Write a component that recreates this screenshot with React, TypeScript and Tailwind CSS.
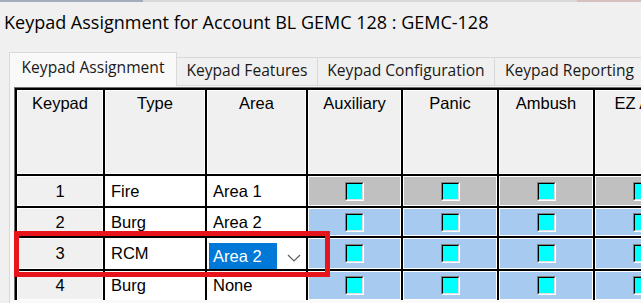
import { Fragment } from "react";

const columns = [
  { label: "Keypad", width: 86 },
  { label: "Type", width: 100 },
  { label: "Area", width: 99 },
  { label: "Auxiliary", width: 93 },
  { label: "Panic", width: 94 },
  { label: "Ambush", width: 94 },
  { label: "EZ Arm", width: 94 },
];

const rows = [
  { keypad: "1", type: "Fire", area: "Area 1", height: 30, disabled: true },
  { keypad: "2", type: "Burg", area: "Area 2", height: 28, disabled: false },
  { keypad: "3", type: "RCM", area: "Area 2", height: 31, disabled: false, editing: true },
  { keypad: "4", type: "Burg", area: "None", height: 29, disabled: false },
];

const tabs = [
  { label: "Keypad Features", width: 141 },
  { label: "Keypad Configuration", width: 177 },
  { label: "Keypad Reporting", width: 150 },
];

function FlagBox() {
  return (
    <div className="border border-t-[#808080] border-l-[#808080] border-b-white border-r-white">
      <div className="h-[17px] w-[17px] border border-t-black border-l-black border-b-[#dfdfdf] border-r-[#dfdfdf] bg-[#00ffff]" />
    </div>
  );
}

function AreaDropdown({ value }: { value: string }) {
  return (
    <div className="flex h-full w-full items-start bg-white pl-[2px] pt-[5px]">
      <span className="flex h-[26px] w-[68px] items-center bg-[#0078d7] pl-[4px] text-white">{value}</span>
      <svg className="ml-[10px] mt-[11px]" width="14" height="8" viewBox="0 0 14 8" fill="none">
        <path d="M1 1 L7 7 L13 1" stroke="#606060" strokeWidth="1.2" />
      </svg>
    </div>
  );
}

export default function App() {
  return (
    <div className="relative h-[303px] w-[641px] overflow-hidden bg-[#f0f0f0] font-['Open_Sans','Noto_Sans',sans-serif]">
      <div className="flex h-[2px]">
        <div className="w-[143px] bg-[#a3adbb]" />
        <div className="w-[434px] bg-[#d9d9d9]" />
        <div className="flex-1 bg-[#d9c0c0]" />
      </div>

      <div className="mt-[8px] h-[24px] pl-[4px] text-[18px] leading-[24px] whitespace-nowrap text-black">
        Keypad Assignment for Account BL GEMC 128 : GEMC-128
      </div>

      <div className="mt-[18px] flex h-[33px] items-end pl-[9px] text-[15.6px] whitespace-nowrap text-[#1a1a1a]">
        <div className="relative z-10 -mb-[1px] flex h-[34px] w-[168px] shrink-0 items-start justify-center border border-b-0 border-[#d9d9d9] bg-[#f9f9f9] pt-[3px]">
          Keypad Assignment
        </div>
        {tabs.map((tab) => (
          <div
            key={tab.label}
            style={{ width: tab.width }}
            className="flex h-[28px] shrink-0 items-center justify-center border border-b-0 border-l-0 border-[#d9d9d9] bg-[#f0f0f0] pb-[1px]"
          >
            {tab.label}
          </div>
        ))}
      </div>

      <div className="ml-[9px] h-[230px] border-l border-t border-[#d9d9d9] bg-[#f9f9f9] pl-[4px] pt-[1px] font-['Liberation_Sans',Arial,sans-serif] text-[16.5px] text-black">
        <div className="inline-block border-l border-t border-[#6e6e6e]">
          <div
            className="grid gap-[2px] bg-black pl-[2px] pt-[2px]"
            style={{ gridTemplateColumns: columns.map((c) => `${c.width}px`).join(" ") }}
          >
            {columns.map((col) => (
              <div
                key={col.label}
                className="h-[84px] overflow-hidden whitespace-nowrap border border-white bg-[#f0f0f0] pt-[3px] text-center leading-[18px]"
              >
                {col.label}
              </div>
            ))}

            {rows.map((row) => (
              <Fragment key={row.keypad}>
                <div
                  style={{ height: row.height }}
                  className="flex items-center justify-center border border-white bg-[#f0f0f0]"
                >
                  {row.keypad}
                </div>
                <div style={{ height: row.height }} className="flex items-center bg-white pl-[6px]">
                  {row.type}
                </div>
                {row.editing ? (
                  <div style={{ height: row.height }} className="bg-white">
                    <AreaDropdown value={row.area} />
                  </div>
                ) : (
                  <div style={{ height: row.height }} className="flex items-center bg-white pl-[6px]">
                    {row.area}
                  </div>
                )}
                {columns.slice(3).map((col) => (
                  <div
                    key={col.label}
                    style={{ height: row.height }}
                    className={`flex items-center justify-center border border-white ${
                      row.disabled ? "bg-[#c0c0c0]" : "bg-[#a6caf0]"
                    }`}
                  >
                    <FlagBox />
                  </div>
                ))}
              </Fragment>
            ))}
          </div>
        </div>
      </div>

      <div className="pointer-events-none absolute left-[14px] top-[231px] h-[46px] w-[316px] border-[5px] border-[#e8141c]" />
    </div>
  );
}
